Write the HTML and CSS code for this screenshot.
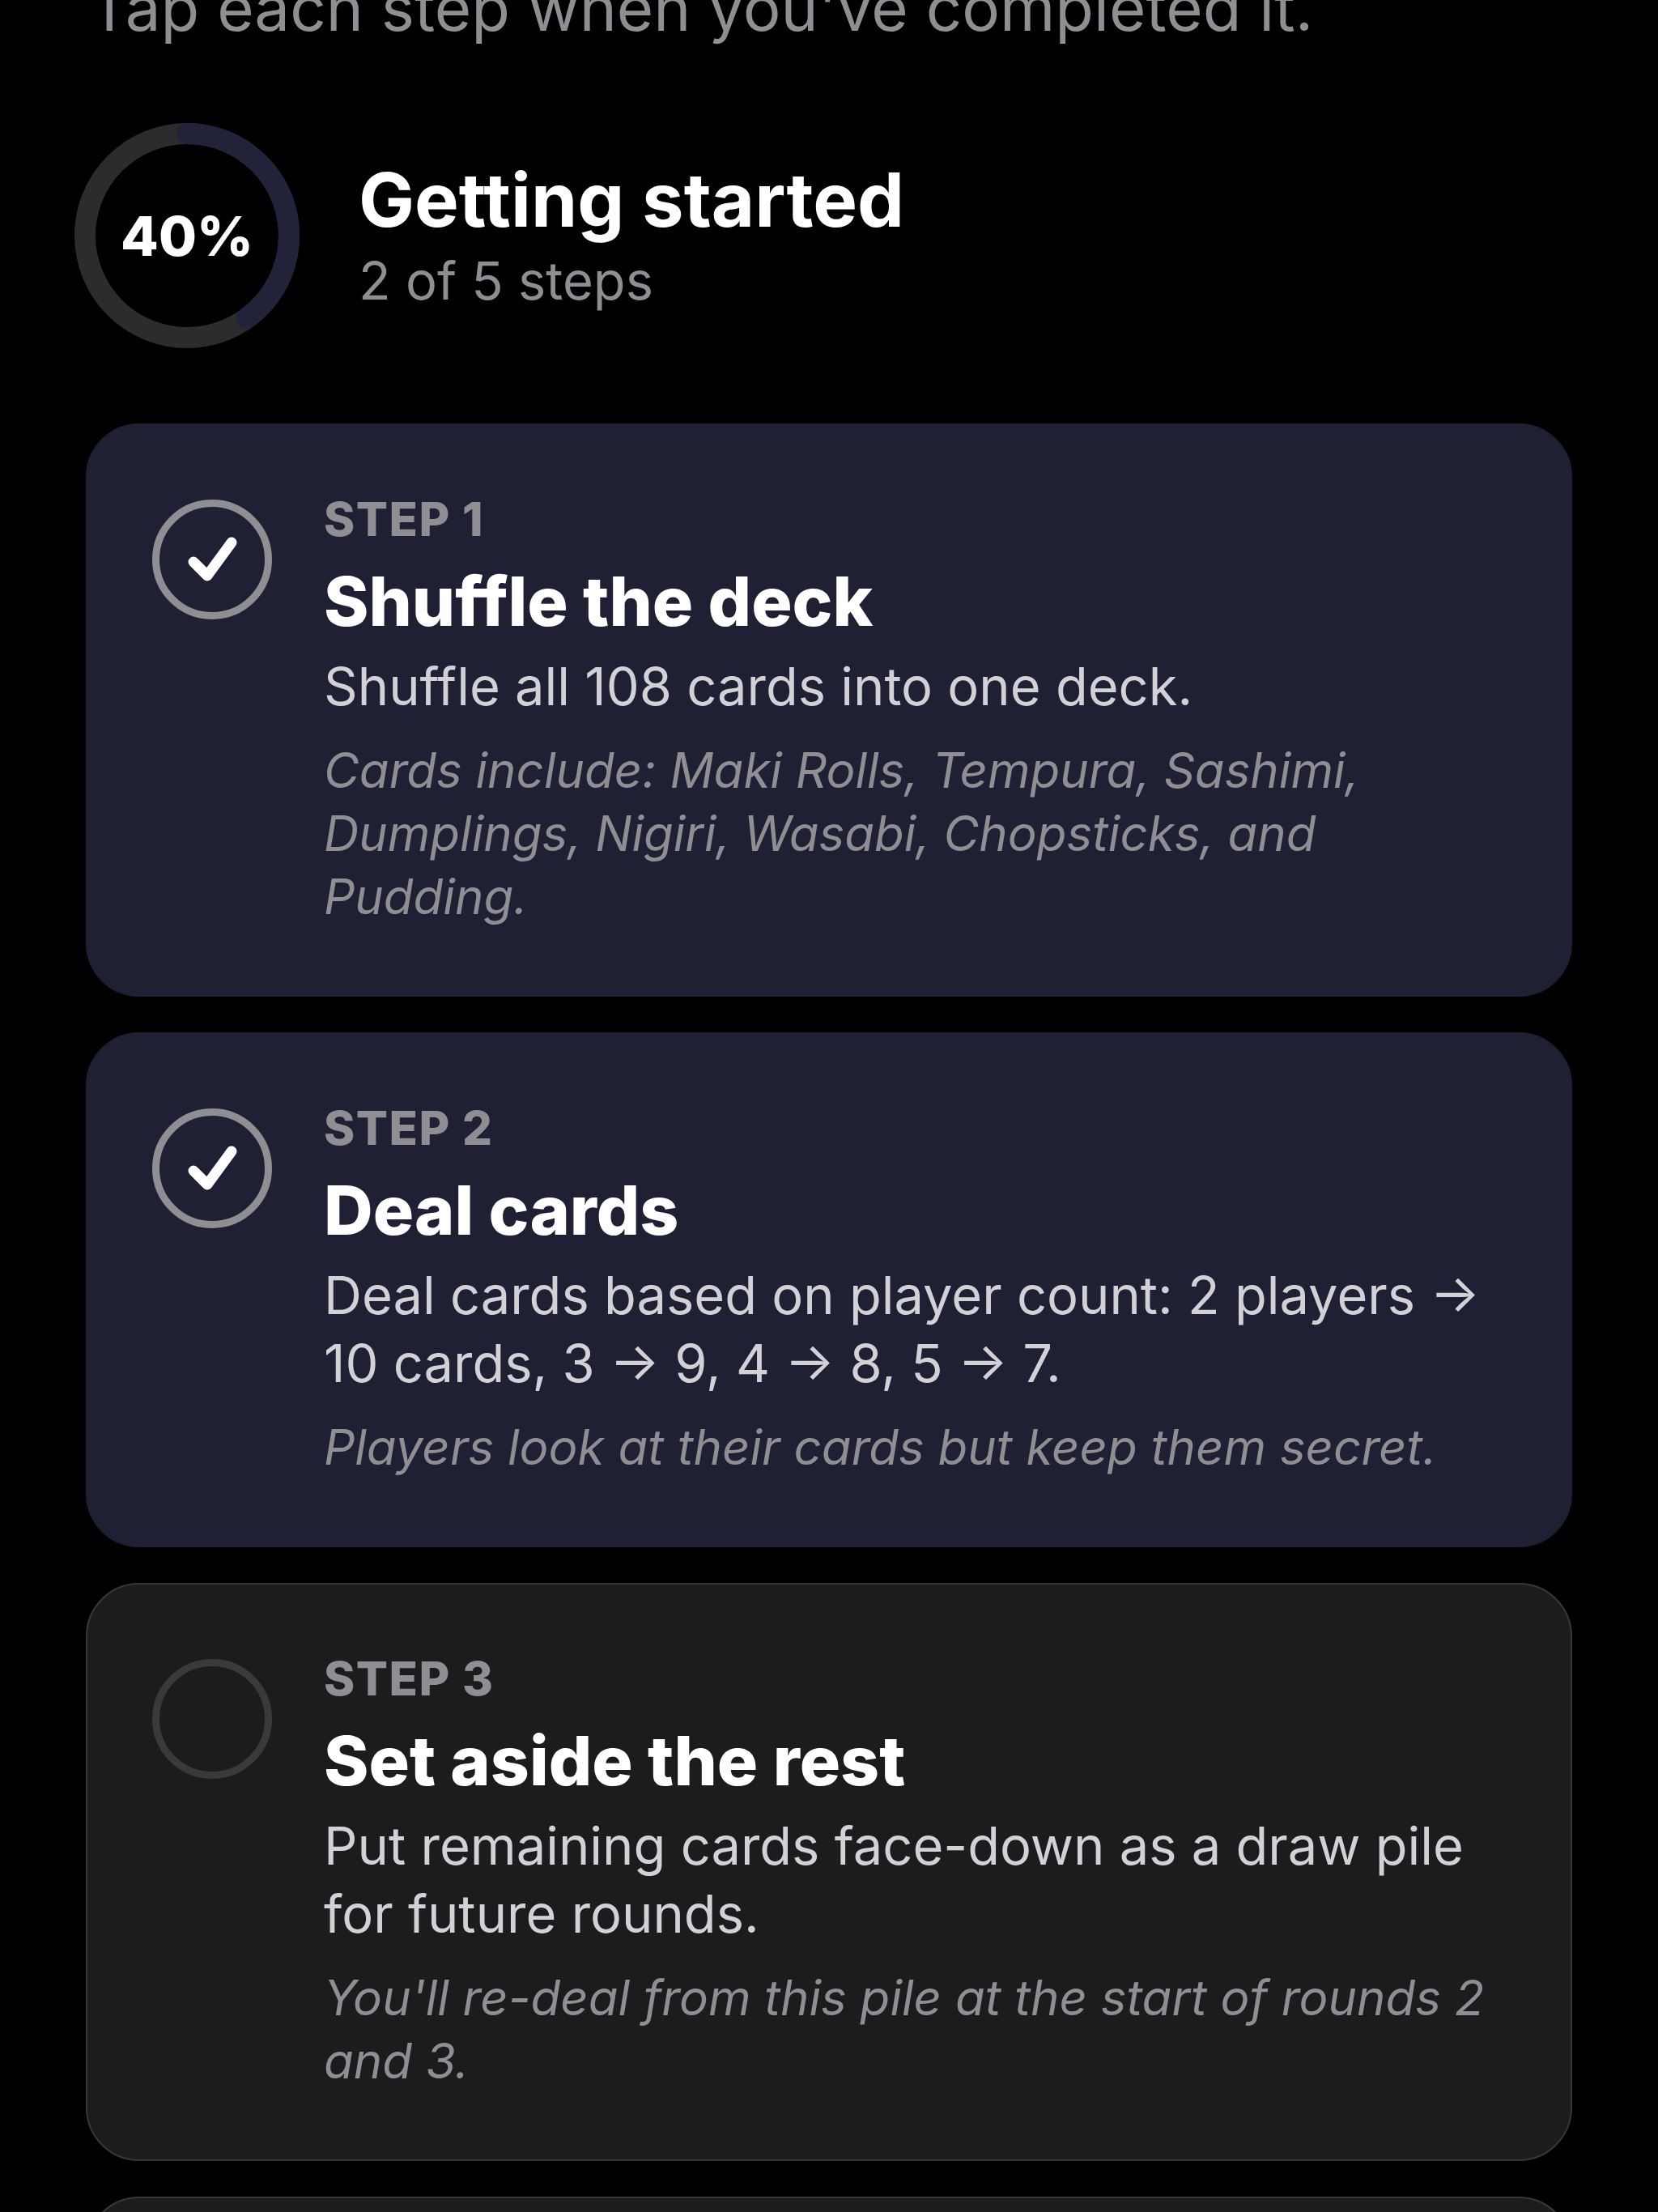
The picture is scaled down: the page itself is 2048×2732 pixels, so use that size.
FILE: index.html
```html
<!DOCTYPE html>
<html lang="en">

<head>
    <meta charset="UTF-8">
    <meta name="viewport" content="width=device-width, initial-scale=1.0">
    <title>Setup checklist</title>
    <link rel="stylesheet" href="styles.css">
</head>

<body>
    <main class="page">
        <p class="intro">Tap each step when you've completed it.</p>

        <header class="progress">
            <div class="ring">
                <svg viewBox="0 0 280 280" width="280" height="280">
                    <circle class="ring-track" cx="140" cy="140" r="126" />
                    <!-- 40% of the circumference, starting at 12 o'clock -->
                    <circle class="ring-fill" cx="140" cy="140" r="126"
                        stroke-dasharray="316.67 791.68" transform="rotate(-90 140 140)" />
                </svg>
                <span class="ring-label">40%</span>
            </div>
            <div class="progress-text">
                <h1>Getting started</h1>
                <p>2 of 5 steps</p>
            </div>
        </header>

        <ol class="steps">
            <li class="step done">
                <svg class="check" viewBox="0 0 148 148" width="148" height="148">
                    <circle cx="74" cy="74" r="69.5" />
                    <path d="M51 77 L68 94 L98 53" />
                </svg>
                <div class="step-body">
                    <span class="step-label">STEP 1</span>
                    <h2>Shuffle the deck</h2>
                    <p class="step-text">Shuffle all 108 cards into one deck.</p>
                    <p class="step-note">Cards include: Maki Rolls, Tempura, Sashimi, Dumplings, Nigiri, Wasabi, Chopsticks, and Pudding.</p>
                </div>
            </li>

            <li class="step done">
                <svg class="check" viewBox="0 0 148 148" width="148" height="148">
                    <circle cx="74" cy="74" r="69.5" />
                    <path d="M51 77 L68 94 L98 53" />
                </svg>
                <div class="step-body">
                    <span class="step-label">STEP 2</span>
                    <h2>Deal cards</h2>
                    <p class="step-text">Deal cards based on player count: 2 players → 10 cards, 3 → 9, 4 → 8, 5 → 7.</p>
                    <p class="step-note">Players look at their cards but keep them secret.</p>
                </div>
            </li>

            <li class="step">
                <svg class="check" viewBox="0 0 148 148" width="148" height="148">
                    <circle cx="74" cy="74" r="69.5" />
                </svg>
                <div class="step-body">
                    <span class="step-label">STEP 3</span>
                    <h2>Set aside the rest</h2>
                    <p class="step-text">Put remaining cards face-down as a draw pile for future rounds.</p>
                    <p class="step-note">You'll re-deal from this pile at the start of rounds 2 and 3.</p>
                </div>
            </li>

            <li class="step">
                <svg class="check" viewBox="0 0 148 148" width="148" height="148">
                    <circle cx="74" cy="74" r="69.5" />
                </svg>
                <div class="step-body">
                    <span class="step-label">STEP 4</span>
                    <h2>Keep score</h2>
                    <p class="step-text">Grab a pencil and the score pad.</p>
                </div>
            </li>
        </ol>
    </main>
</body>

</html>
```

FILE: styles.css
```css
body {
    margin: 0;
    background: #000;
    color: #fff;
    font-family: Inter, "Noto Sans", sans-serif;
    height: 2732px;
    overflow: hidden;
}

.page {
    padding: 0 106px;
}

.intro {
    margin: -36px 0 0 4px;
    font-size: 78px;
    line-height: 92px;
    color: #8e8e93;
}

/* overall progress */
.progress {
    display: flex;
    align-items: center;
    gap: 72px;
    margin: 95px 0 0 -15px;
}

.ring {
    display: grid;
    place-items: center;
    width: 280px;
    height: 280px;
}

.ring svg,
.ring-label {
    grid-area: 1 / 1;
}

.ring circle {
    fill: none;
    stroke-width: 26;
}

.ring-track {
    stroke: #2c2c2e;
}

.ring-fill {
    stroke: #22233a;
    stroke-linecap: round;
}

.ring-label {
    font-size: 68px;
    font-weight: 800;
}

.progress-text h1 {
    margin: 0;
    font-size: 92px;
    line-height: 104px;
    font-weight: 700;
}

.progress-text p {
    margin: 8px 0 0;
    font-size: 65px;
    line-height: 80px;
    color: #8e8e93;
}

/* step cards */
.steps {
    list-style: none;
    margin: 92px 0 0;
    padding: 0;
    display: flex;
    flex-direction: column;
    gap: 44px;
}

.step {
    display: flex;
    align-items: flex-start;
    gap: 64px;
    padding: 82px 82px 83px 80px;
    background: #1c1c1e;
    border: 2px solid #38383a;
    border-radius: 66px;
}

.step.done {
    background: #1f2033;
    border-color: #1f2033;
}

.check {
    flex: none;
    margin-top: 10px;
}

.check circle {
    fill: none;
    stroke: #3a3a3c;
    stroke-width: 9;
}

.done .check circle {
    stroke: #8e8e93;
}

.check path {
    fill: none;
    stroke: #fff;
    stroke-width: 13;
    stroke-linecap: round;
    stroke-linejoin: round;
}

.step-body {
    flex: 1;
}

.step-label {
    display: block;
    font-size: 58px;
    line-height: 68px;
    font-weight: 800;
    letter-spacing: 1.5px;
    color: #8e8e93;
}

.step-body h2 {
    margin: 18px 0 0;
    font-size: 84px;
    line-height: 100px;
    font-weight: 800;
}

.step-text {
    margin: 13px 0 0;
    font-size: 65px;
    line-height: 84px;
    color: #d1d1d6;
}

.step-note {
    margin: 22px 0 0;
    font-size: 60px;
    line-height: 78px;
    font-style: italic;
    color: #8e8e93;
}
```
